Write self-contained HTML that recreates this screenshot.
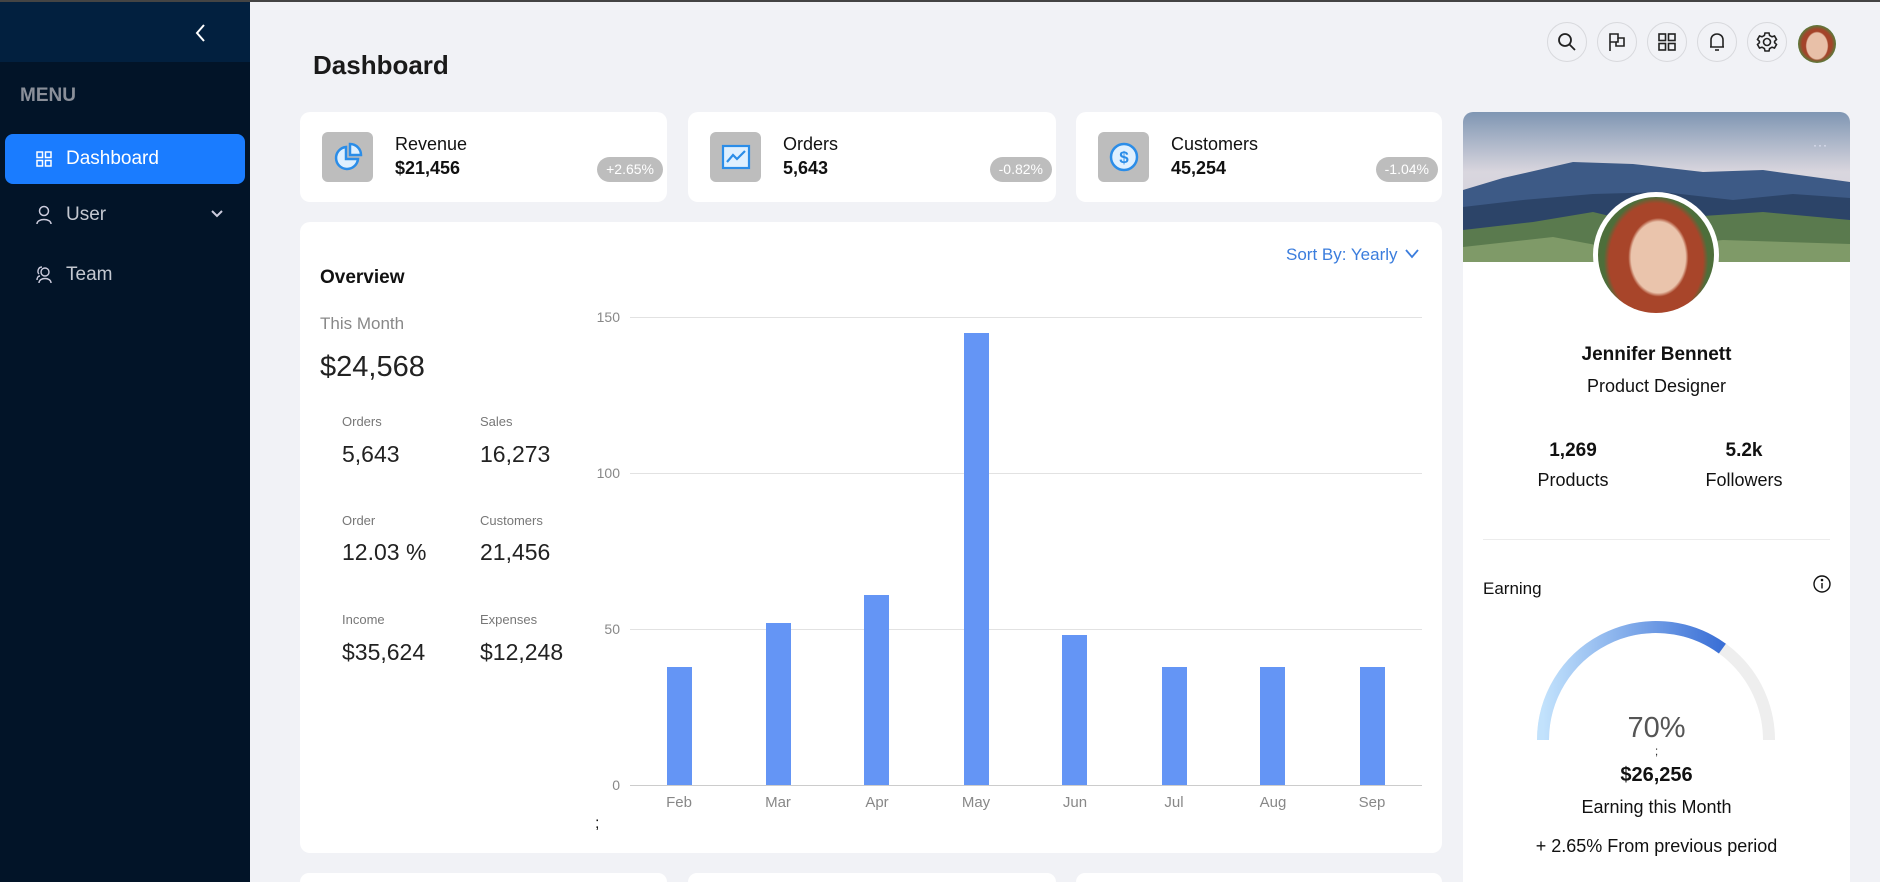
<!DOCTYPE html>
<html style="width:1880px;height:882px;overflow:hidden"><head><meta charset="utf-8"><style>
*{box-sizing:border-box;margin:0;padding:0}
body{width:1880px;height:882px;overflow:hidden;background:#f1f2f6;font-family:"Liberation Sans",sans-serif;position:relative;color:#111}
.abs{position:absolute}
.side{left:0;top:0;width:250px;height:882px;background:#021428}
.sidetop{left:0;top:0;width:250px;height:62px;background:#02203f}
.card{background:#fff;border-radius:10px;position:absolute}
.ib{width:51px;height:50px;background:#bdbdbd;border-radius:6px;left:22px;top:20px;display:flex;align-items:center;justify-content:center}
.lbl{left:95px;top:22px;font-size:18px;color:#111}
.val{left:95px;top:46px;font-size:18px;font-weight:bold}
.badge{right:4px;top:45px;height:25px;padding:0 9px;border-radius:13px;background:#bdbdbd;color:#fff;font-size:14px;line-height:25px}
.circ{width:40px;height:40px;border-radius:50%;border:1px solid #d8d9dd;top:22px;display:flex;align-items:center;justify-content:center}
.sl{font-size:13px;color:#777}
.sv{font-size:23px;color:#222}
.ax{font-size:14px;color:#888}
.mo{font-size:15px;color:#888;width:60px;text-align:center}
.bar{background:#6495f5;width:25px}
.grid{left:630px;width:792px;height:1px;background:#e2e2e2}
</style></head><body>
<div class="abs side"></div><div class="abs sidetop"></div>
<div class="abs" style="left:0;top:0;width:1880px;height:2px;background:#444"></div>
<svg class="abs" style="left:194px;top:23px" width="14" height="20" viewBox="0 0 14 20"><path d="M10 2 L3 10 L10 18" stroke="#fff" stroke-width="2" fill="none"/></svg>
<div class="abs" style="left:20px;top:85px;font-size:19px;font-weight:bold;color:#8a8f99">MENU</div>
<div class="abs" style="left:5px;top:134px;width:240px;height:50px;background:#1a7cff;border-radius:8px"></div>
<svg class="abs" style="left:36px;top:151px" width="16" height="16" viewBox="0 0 16 16" fill="none" stroke="#fff" stroke-width="1.5"><rect x="1" y="1" width="5.5" height="5.5"/><rect x="9.5" y="1" width="5.5" height="5.5"/><rect x="1" y="9.5" width="5.5" height="5.5"/><rect x="9.5" y="9.5" width="5.5" height="5.5"/></svg>
<div class="abs" style="left:66px;top:148px;font-size:19px;color:#fff">Dashboard</div>
<svg class="abs" style="left:35px;top:205px" width="18" height="20" viewBox="0 0 18 20" fill="none" stroke="#ccd" stroke-width="1.5"><circle cx="9" cy="6" r="4.5"/><path d="M2 19 C2 13 16 13 16 19"/></svg>
<div class="abs" style="left:66px;top:204px;font-size:19px;color:#c4c8d0">User</div>
<svg class="abs" style="left:210px;top:209px" width="14" height="10" viewBox="0 0 14 10"><path d="M2 2 L7 7 L12 2" stroke="#ccd" stroke-width="2" fill="none"/></svg>
<svg class="abs" style="left:35px;top:264px" width="18" height="20" viewBox="0 0 18 20" fill="none" stroke="#ccd" stroke-width="1.4"><circle cx="10" cy="8" r="4"/><path d="M4 19 C4 13 16 13 16 19"/><path d="M7 3 C3 3 2 8 4 10 M2 16 C2 14 3 12 5 12"/></svg>
<div class="abs" style="left:66px;top:264px;font-size:19px;color:#c4c8d0">Team</div>

<div class="abs" style="left:313px;top:50px;font-size:26px;font-weight:bold;color:#1a1a1a">Dashboard</div>

<div class="abs circ" style="left:1547px"><svg width="20" height="20" viewBox="0 0 20 20" fill="none" stroke="#222" stroke-width="1.8"><circle cx="8" cy="8" r="6"/><path d="M12.5 12.5 L18 18"/></svg></div>
<div class="abs circ" style="left:1597px"><svg width="20" height="20" viewBox="0 0 20 20" fill="none" stroke="#222" stroke-width="1.6"><path d="M3 19 V2 H11 V6 H17 V14 H9 V10 H3"/><path d="M11 6 V10 H9"/></svg></div>
<div class="abs circ" style="left:1647px"><svg width="20" height="20" viewBox="0 0 20 20" fill="none" stroke="#222" stroke-width="1.6"><rect x="2" y="2" width="6.5" height="6.5"/><rect x="11.5" y="2" width="6.5" height="6.5"/><rect x="2" y="11.5" width="6.5" height="6.5"/><rect x="11.5" y="11.5" width="6.5" height="6.5"/></svg></div>
<div class="abs circ" style="left:1697px"><svg width="20" height="22" viewBox="0 0 20 22" fill="none" stroke="#222" stroke-width="1.6"><path d="M4 16 V9 C4 5 7 3 10 3 C13 3 16 5 16 9 V16 H3 H17"/><path d="M8 19 H12"/></svg></div>
<div class="abs circ" style="left:1747px"><svg width="22" height="22" viewBox="0 0 22 22" fill="none" stroke="#222" stroke-width="1.6"><circle cx="11" cy="11" r="3.5"/><path d="M9 2 H13 L13.6 4.5 L16 5.8 L18.5 5 L20.5 8.5 L18.6 10.3 V11.7 L20.5 13.5 L18.5 17 L16 16.2 L13.6 17.5 L13 20 H9 L8.4 17.5 L6 16.2 L3.5 17 L1.5 13.5 L3.4 11.7 V10.3 L1.5 8.5 L3.5 5 L6 5.8 L8.4 4.5 Z"/></svg></div>
<div class="abs" style="left:1798px;top:25px;width:38px;height:38px;border-radius:50%;background:radial-gradient(ellipse 30% 38% at 50% 55%,#e8c0a8 0 90%,transparent 100%),radial-gradient(circle at 50% 50%,#a4442a 0 55%,#5a7a3a 70%)"></div>

<!-- stat cards -->
<div class="card" style="left:300px;top:112px;width:367px;height:90px">
<div class="abs ib"><svg width="30" height="30" viewBox="0 0 30 30" fill="none" stroke="#2b8de8" stroke-width="2.5"><path d="M13 5 A11 11 0 1 0 25 17 H13 Z" fill="#dff0ff"/><path d="M17 2 A11 11 0 0 1 28 13 H17 Z" fill="#dff0ff"/></svg></div>
<div class="abs lbl">Revenue</div><div class="abs val">$21,456</div><div class="abs badge">+2.65%</div></div>
<div class="card" style="left:688px;top:112px;width:368px;height:90px">
<div class="abs ib"><svg width="30" height="26" viewBox="0 0 30 26" fill="none" stroke="#2b8de8" stroke-width="2.2"><rect x="2" y="2" width="26" height="22" fill="#dff0ff"/><path d="M6 18 L12 11 L16 15 L24 7"/></svg></div>
<div class="abs lbl">Orders</div><div class="abs val">5,643</div><div class="abs badge">-0.82%</div></div>
<div class="card" style="left:1076px;top:112px;width:366px;height:90px">
<div class="abs ib"><svg width="32" height="32" viewBox="0 0 32 32"><circle cx="16" cy="16" r="13" fill="#dff0ff" stroke="#2b8de8" stroke-width="2.5"/><text x="16" y="22" text-anchor="middle" font-size="17" font-family="Liberation Sans" fill="#2b8de8" font-weight="bold">$</text></svg></div>
<div class="abs lbl">Customers</div><div class="abs val">45,254</div><div class="abs badge">-1.04%</div></div>

<!-- overview -->
<div class="card" style="left:300px;top:222px;width:1142px;height:631px"></div>
<div class="abs" style="left:320px;top:267px;font-size:19px;font-weight:bold">Overview</div>
<div class="abs" style="left:1286px;top:245px;font-size:17px;color:#3b7ddd">Sort By: Yearly</div>
<svg class="abs" style="left:1404px;top:248px" width="16" height="12" viewBox="0 0 16 12"><path d="M2 2 L8 9 L14 2" stroke="#3b7ddd" stroke-width="1.8" fill="none"/></svg>
<div class="abs" style="left:320px;top:314px;font-size:17px;color:#888">This Month</div>
<div class="abs" style="left:320px;top:351px;font-size:29px;color:#222">$24,568</div>
<div class="abs sl" style="left:342px;top:414px">Orders</div><div class="abs sv" style="left:342px;top:441px">5,643</div>
<div class="abs sl" style="left:480px;top:414px">Sales</div><div class="abs sv" style="left:480px;top:441px">16,273</div>
<div class="abs sl" style="left:342px;top:513px">Order</div><div class="abs sv" style="left:342px;top:539px">12.03 %</div>
<div class="abs sl" style="left:480px;top:513px">Customers</div><div class="abs sv" style="left:480px;top:539px">21,456</div>
<div class="abs sl" style="left:342px;top:612px">Income</div><div class="abs sv" style="left:342px;top:639px">$35,624</div>
<div class="abs sl" style="left:480px;top:612px">Expenses</div><div class="abs sv" style="left:480px;top:639px">$12,248</div>

<div class="abs grid" style="top:317px"></div><div class="abs grid" style="top:473px"></div><div class="abs grid" style="top:629px"></div><div class="abs grid" style="top:785px;background:#ccc"></div>
<div class="abs ax" style="left:590px;top:309px;width:30px;text-align:right">150</div>
<div class="abs ax" style="left:590px;top:465px;width:30px;text-align:right">100</div>
<div class="abs ax" style="left:590px;top:621px;width:30px;text-align:right">50</div>
<div class="abs ax" style="left:590px;top:777px;width:30px;text-align:right">0</div>
<div class="abs bar" style="left:667px;top:667px;height:118px"></div>
<div class="abs bar" style="left:766px;top:623px;height:162px"></div>
<div class="abs bar" style="left:864px;top:595px;height:190px"></div>
<div class="abs bar" style="left:964px;top:333px;height:452px"></div>
<div class="abs bar" style="left:1062px;top:635px;height:150px"></div>
<div class="abs bar" style="left:1162px;top:667px;height:118px"></div>
<div class="abs bar" style="left:1260px;top:667px;height:118px"></div>
<div class="abs bar" style="left:1360px;top:667px;height:118px"></div>
<div class="abs mo" style="left:649px;top:794px">Feb</div><div class="abs mo" style="left:748px;top:794px">Mar</div><div class="abs mo" style="left:847px;top:794px">Apr</div><div class="abs mo" style="left:946px;top:794px">May</div><div class="abs mo" style="left:1045px;top:794px">Jun</div><div class="abs mo" style="left:1144px;top:794px">Jul</div><div class="abs mo" style="left:1243px;top:794px">Aug</div><div class="abs mo" style="left:1342px;top:794px">Sep</div>
<div class="abs" style="left:595px;top:815px;font-size:16px">;</div>

<!-- bottom cards -->
<div class="card" style="left:300px;top:873px;width:367px;height:9px;border-radius:10px 10px 0 0"></div>
<div class="card" style="left:688px;top:873px;width:368px;height:9px;border-radius:10px 10px 0 0"></div>
<div class="card" style="left:1076px;top:873px;width:366px;height:9px;border-radius:10px 10px 0 0"></div>

<!-- profile -->
<div class="card" style="left:1463px;top:112px;width:387px;height:770px;overflow:hidden;border-radius:10px 10px 0 0">
<svg class="abs" style="left:0;top:0" width="387" height="150" viewBox="0 0 387 150">
<defs><linearGradient id="sky" x1="0" y1="0" x2="0" y2="1"><stop offset="0" stop-color="#7f96b3"/><stop offset="0.4" stop-color="#d9d6de"/><stop offset="1" stop-color="#c8ccd6"/></linearGradient></defs>
<rect width="387" height="150" fill="url(#sky)"/>
<path d="M0 78 L40 66 L110 50 L170 52 L240 60 L300 58 L387 70 V150 H0Z" fill="#3d5a86"/>
<path d="M0 95 L60 88 L130 82 L200 80 L270 88 L330 82 L387 86 V150 H0Z" fill="#2c4468"/>
<path d="M0 118 L70 110 L130 100 L180 112 L240 104 L300 100 L387 108 V150 H0Z" fill="#5a7a4e"/>
<path d="M0 135 L90 125 L160 138 L260 128 L387 132 V150 H0Z" fill="#7f9a68"/>
</svg>
<div class="abs" style="left:130px;top:80px;width:126px;height:126px;border-radius:50%;background:#fff;padding:5px"><div style="width:100%;height:100%;border-radius:50%;background:radial-gradient(ellipse 26% 34% at 52% 52%,#eac4ac 0 90%,transparent 100%),radial-gradient(ellipse 45% 55% at 50% 55%,#a8452a 0 90%,transparent 100%),#4d6e3a"></div></div>
<div class="abs" style="left:0;width:387px;text-align:center;top:232px;font-size:19px;font-weight:bold">Jennifer Bennett</div>
<div class="abs" style="left:0;width:387px;text-align:center;top:264px;font-size:18px">Product Designer</div>
<div class="abs" style="left:50px;width:120px;text-align:center;top:328px;font-size:19px;font-weight:bold">1,269</div>
<div class="abs" style="left:50px;width:120px;text-align:center;top:358px;font-size:18px">Products</div>
<div class="abs" style="left:221px;width:120px;text-align:center;top:328px;font-size:19px;font-weight:bold">5.2k</div>
<div class="abs" style="left:221px;width:120px;text-align:center;top:358px;font-size:18px">Followers</div>
<div class="abs" style="left:20px;top:427px;width:347px;height:1px;background:#ececec"></div>
<div class="abs" style="left:20px;top:467px;font-size:17px">Earning</div>
<svg class="abs" style="left:349px;top:462px" width="20" height="20" viewBox="0 0 20 20" fill="none" stroke="#111" stroke-width="1.4"><circle cx="10" cy="10" r="8"/><path d="M10 9 V14.5"/><circle cx="10" cy="6" r="0.6" fill="#111"/></svg>
<svg class="abs" style="left:60px;top:490px" width="266" height="140" viewBox="0 0 266 140">
<defs><linearGradient id="g" x1="0" y1="0" x2="1" y2="0"><stop offset="0" stop-color="#c2e2fc"/><stop offset="1" stop-color="#3a6fd6"/></linearGradient></defs>
<path d="M20 138 A113 113 0 0 1 246 138" stroke="#eeeeee" stroke-width="12" fill="none"/>
<path d="M20 138 A113 113 0 0 1 199.4 46.6" stroke="url(#g)" stroke-width="12" fill="none"/>
</svg>
<div class="abs" style="left:0;width:387px;text-align:center;top:600px;font-size:29px;color:#555">70%</div>
<div class="abs" style="left:0;width:387px;text-align:center;top:632px;font-size:12px;color:#333">;</div>
<div class="abs" style="left:0;width:387px;text-align:center;top:652px;font-size:20px;font-weight:bold">$26,256</div>
<div class="abs" style="left:0;width:387px;text-align:center;top:685px;font-size:18px">Earning this Month</div>
<div class="abs" style="left:0;width:387px;text-align:center;top:724px;font-size:18px">+ 2.65% From previous period</div>
<div class="abs" style="left:350px;top:26px;color:#eef;font-size:12px;letter-spacing:1px">···</div>
</div>
</body></html>
